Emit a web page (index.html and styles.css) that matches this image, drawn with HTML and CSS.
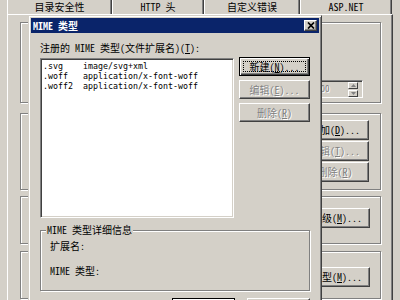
FILE: index.html
```html
<!DOCTYPE html>
<html lang="zh-CN">
  <head>
    <meta charset="UTF-8" />
    <title>MIME 类型</title>
    <link rel="stylesheet" href="styles.css">
  </head>
  <body>
    <div class="tabs">
      <div class="tab tab-dir">目录安全性</div>
      <div class="tab tab-http">HTTP 头</div>
      <div class="tab tab-err">自定义错误</div>
      <div class="tab tab-asp">ASP.NET</div>
    </div>

    <div class="page">
      <div class="group g-expire">
        <div class="spin-edit">
          <span class="dim">100</span>
          <div class="spinner">
            <div class="spin-btn">
              <svg width="5" height="3" viewBox="0 0 5 3"><path d="M2.5 0L5 3H0z" fill="#808080"/></svg>
            </div>
            <div class="spin-btn">
              <svg width="5" height="3" viewBox="0 0 5 3"><path d="M0 0h5L2.5 3z" fill="#808080"/></svg>
            </div>
          </div>
        </div>
      </div>
      <div class="group g-headers">
        <div class="side-buttons">
          <div class="btn">添加(<u>D</u>)...</div>
          <div class="btn disabled">编辑(<u>T</u>)...</div>
          <div class="btn disabled">删除(<u>R</u>)</div>
        </div>
      </div>
      <div class="group g-rating">
        <div class="btn btn-auto">编辑分级(<u>M</u>)...</div>
      </div>
      <div class="group g-mime">
        <div class="btn btn-auto">MIME 类型(<u>M</u>)...</div>
      </div>
    </div>

    <div class="dialog">
      <div class="titlebar">
        <span class="title">MIME 类型</span>
        <div class="close">
          <svg width="8" height="7" viewBox="0 0 8 7">
            <path d="M1 0.5L7 6.5M7 0.5L1 6.5" stroke="#000" stroke-width="1.7"/>
          </svg>
        </div>
      </div>

      <div class="dlg-body">
        <div class="label">注册的 MIME 类型(文件扩展名)(<u>T</u>):</div>

        <div class="main-row">
          <div class="listbox">
            <div class="list-row"><span class="ext">.svg</span><span>image/svg+xml</span></div>
            <div class="list-row"><span class="ext">.woff</span><span>application/x-font-woff</span></div>
            <div class="list-row"><span class="ext">.woff2</span><span>application/x-font-woff</span></div>
          </div>
          <div class="btn-col">
            <div class="btn default focus">新建(<u>N</u>)...</div>
            <div class="btn disabled">编辑(<u>E</u>)...</div>
            <div class="btn disabled">删除(<u>R</u>)</div>
          </div>
        </div>

        <div class="details">
          <span class="legend">MIME 类型详细信息</span>
          <div class="field">扩展名:</div>
          <div class="field field-type">MIME 类型:</div>
        </div>

        <div class="footer">
          <div class="btn default">确定</div>
          <div class="btn">取消</div>
        </div>
      </div>
    </div>
  </body>
</html>
```

FILE: styles.css
```css
body {
  margin: 0;
  width: 400px;
  height: 300px;
  overflow: hidden;
  position: relative;
  background-color: #d4d0c8;
  color: #000;
  font-family: "Noto Sans Mono CJK SC", "Noto Sans CJK SC", "Liberation Mono", monospace;
  font-size: 10px;
  line-height: 12px;
}

u {
  text-underline-offset: 1px;
}

/* property sheet behind the dialog */

.tabs {
  display: flex;
  height: 14px;
  padding-left: 7px;
}

.tab {
  box-sizing: border-box;
  height: 14px;
  border-left: 1px solid #fff;
  border-right: 1px solid #404040;
  box-shadow: inset -1px 0 #808080;
  text-align: center;
  line-height: 13px;
}

.tab-dir {
  width: 105px;
}

.tab-http {
  width: 92px;
}

.tab-err {
  width: 96px;
}

.tab-asp {
  width: 92px;
}

.page {
  margin: 0 7px;
  height: 278px;
  border-top: 1px solid #fff;
  border-left: 1px solid #fff;
  border-right: 1px solid #404040;
  box-shadow: inset -1px 0 #808080;
  padding: 7px 11px 0 12px;
}

.group {
  box-sizing: border-box;
  border: 1px solid #808080;
  box-shadow: inset 1px 1px #fff, 1px 1px #fff;
  display: flex;
  justify-content: flex-end;
  align-items: flex-start;
}

.g-expire {
  height: 81px;
  padding: 57px 17px 0 0;
}

.g-headers {
  height: 77px;
  margin-top: 10px;
  padding: 6px 11px 0 0;
}

.g-rating {
  height: 48px;
  margin-top: 6px;
  padding: 11px 10px 0 0;
}

.g-mime {
  height: 48px;
  margin-top: 7px;
  padding: 15px 10px 0 0;
}

.spin-edit {
  box-sizing: border-box;
  width: 63px;
  height: 18px;
  border-top: 1px solid #808080;
  border-left: 1px solid #808080;
  border-right: 1px solid #fff;
  border-bottom: 1px solid #fff;
  box-shadow: inset 1px 1px #404040;
  display: flex;
  justify-content: space-between;
  align-items: center;
  padding: 0 4px 0 15px;
}

.dim {
  color: #808080;
  text-shadow: 1px 1px 0 #fff;
  font-size: 9px;
}

.spinner {
  display: flex;
  flex-direction: column;
  gap: 1px;
}

.spin-btn {
  box-sizing: border-box;
  width: 10px;
  height: 7px;
  border-top: 1px solid #fff;
  border-left: 1px solid #fff;
  border-right: 1px solid #404040;
  border-bottom: 1px solid #404040;
  display: flex;
  align-items: center;
  justify-content: center;
}

.side-buttons {
  display: flex;
  flex-direction: column;
  gap: 1px;
  width: 68px;
}

/* buttons */

.btn {
  box-sizing: border-box;
  height: 20px;
  border-top: 1px solid #fff;
  border-left: 1px solid #fff;
  border-right: 1px solid #404040;
  border-bottom: 1px solid #404040;
  box-shadow: inset -1px -1px #808080;
  display: flex;
  align-items: center;
  justify-content: center;
  white-space: nowrap;
  position: relative;
}

.btn-auto {
  padding: 0 7px;
}

.btn.default {
  border: 1px solid #000;
  box-shadow: inset 1px 1px #fff, inset -1px -1px #404040, inset -2px -2px #808080;
}

.btn.focus::after {
  content: "";
  position: absolute;
  top: 3px;
  left: 3px;
  right: 3px;
  bottom: 3px;
  border: 1px dotted #000;
}

.btn.disabled {
  color: #808080;
  text-shadow: 1px 1px 0 #fff;
}

/* MIME dialog */

.dialog {
  position: absolute;
  left: 28px;
  top: 15px;
  width: 294px;
  height: 285px;
  overflow: hidden;
  box-sizing: border-box;
  border-top: 1px solid #d4d0c8;
  border-left: 1px solid #d4d0c8;
  border-right: 1px solid #404040;
  box-shadow: inset 1px 1px #fff, inset -1px 0 #808080;
  padding: 2px;
  background-color: #d4d0c8;
}

.titlebar {
  height: 15px;
  background-color: #0a246a;
  display: flex;
  align-items: center;
  justify-content: space-between;
  padding: 0 2px 0 2px;
}

.title {
  color: #fff;
  font-weight: bold;
  font-size: 10px;
}

.close {
  box-sizing: border-box;
  width: 13px;
  height: 11px;
  background-color: #d4d0c8;
  border-top: 1px solid #fff;
  border-left: 1px solid #fff;
  border-right: 1px solid #404040;
  border-bottom: 1px solid #404040;
  box-shadow: inset -1px -1px #808080;
  display: flex;
  align-items: center;
  justify-content: center;
}

.dlg-body {
  padding: 9px 9px 0 9px;
}

.main-row {
  display: flex;
  align-items: flex-start;
  gap: 5px;
  margin-top: 4px;
}

.listbox {
  box-sizing: border-box;
  width: 194px;
  height: 160px;
  background-color: #fff;
  border-top: 1px solid #808080;
  border-left: 1px solid #808080;
  border-right: 1px solid #fff;
  border-bottom: 1px solid #fff;
  box-shadow: inset 1px 1px #404040, inset -1px -1px #d4d0c8;
  padding: 2px 2px;
}

.list-row {
  display: flex;
  font-family: "DejaVu Sans Mono", monospace;
  font-size: 8.3px;
  line-height: 10px;
  white-space: nowrap;
}

.ext {
  width: 40px;
}

.btn-col {
  width: 71px;
  margin-top: -1px;
  display: flex;
  flex-direction: column;
  gap: 4px;
}

.btn-col .btn {
  height: 19px;
}

.details {
  position: relative;
  box-sizing: border-box;
  height: 61px;
  margin-top: 12px;
  border: 1px solid #808080;
  box-shadow: inset 1px 1px #fff, 1px 1px #fff;
  padding: 9px 9px 0 9px;
}

.legend {
  position: absolute;
  top: -7px;
  left: 5px;
  padding: 0 1px;
  background-color: #d4d0c8;
}

.field-type {
  margin-top: 13px;
}

.footer {
  display: flex;
  justify-content: flex-end;
  gap: 12px;
  margin-top: 7px;
}

.footer .btn {
  width: 63px;
}
```
